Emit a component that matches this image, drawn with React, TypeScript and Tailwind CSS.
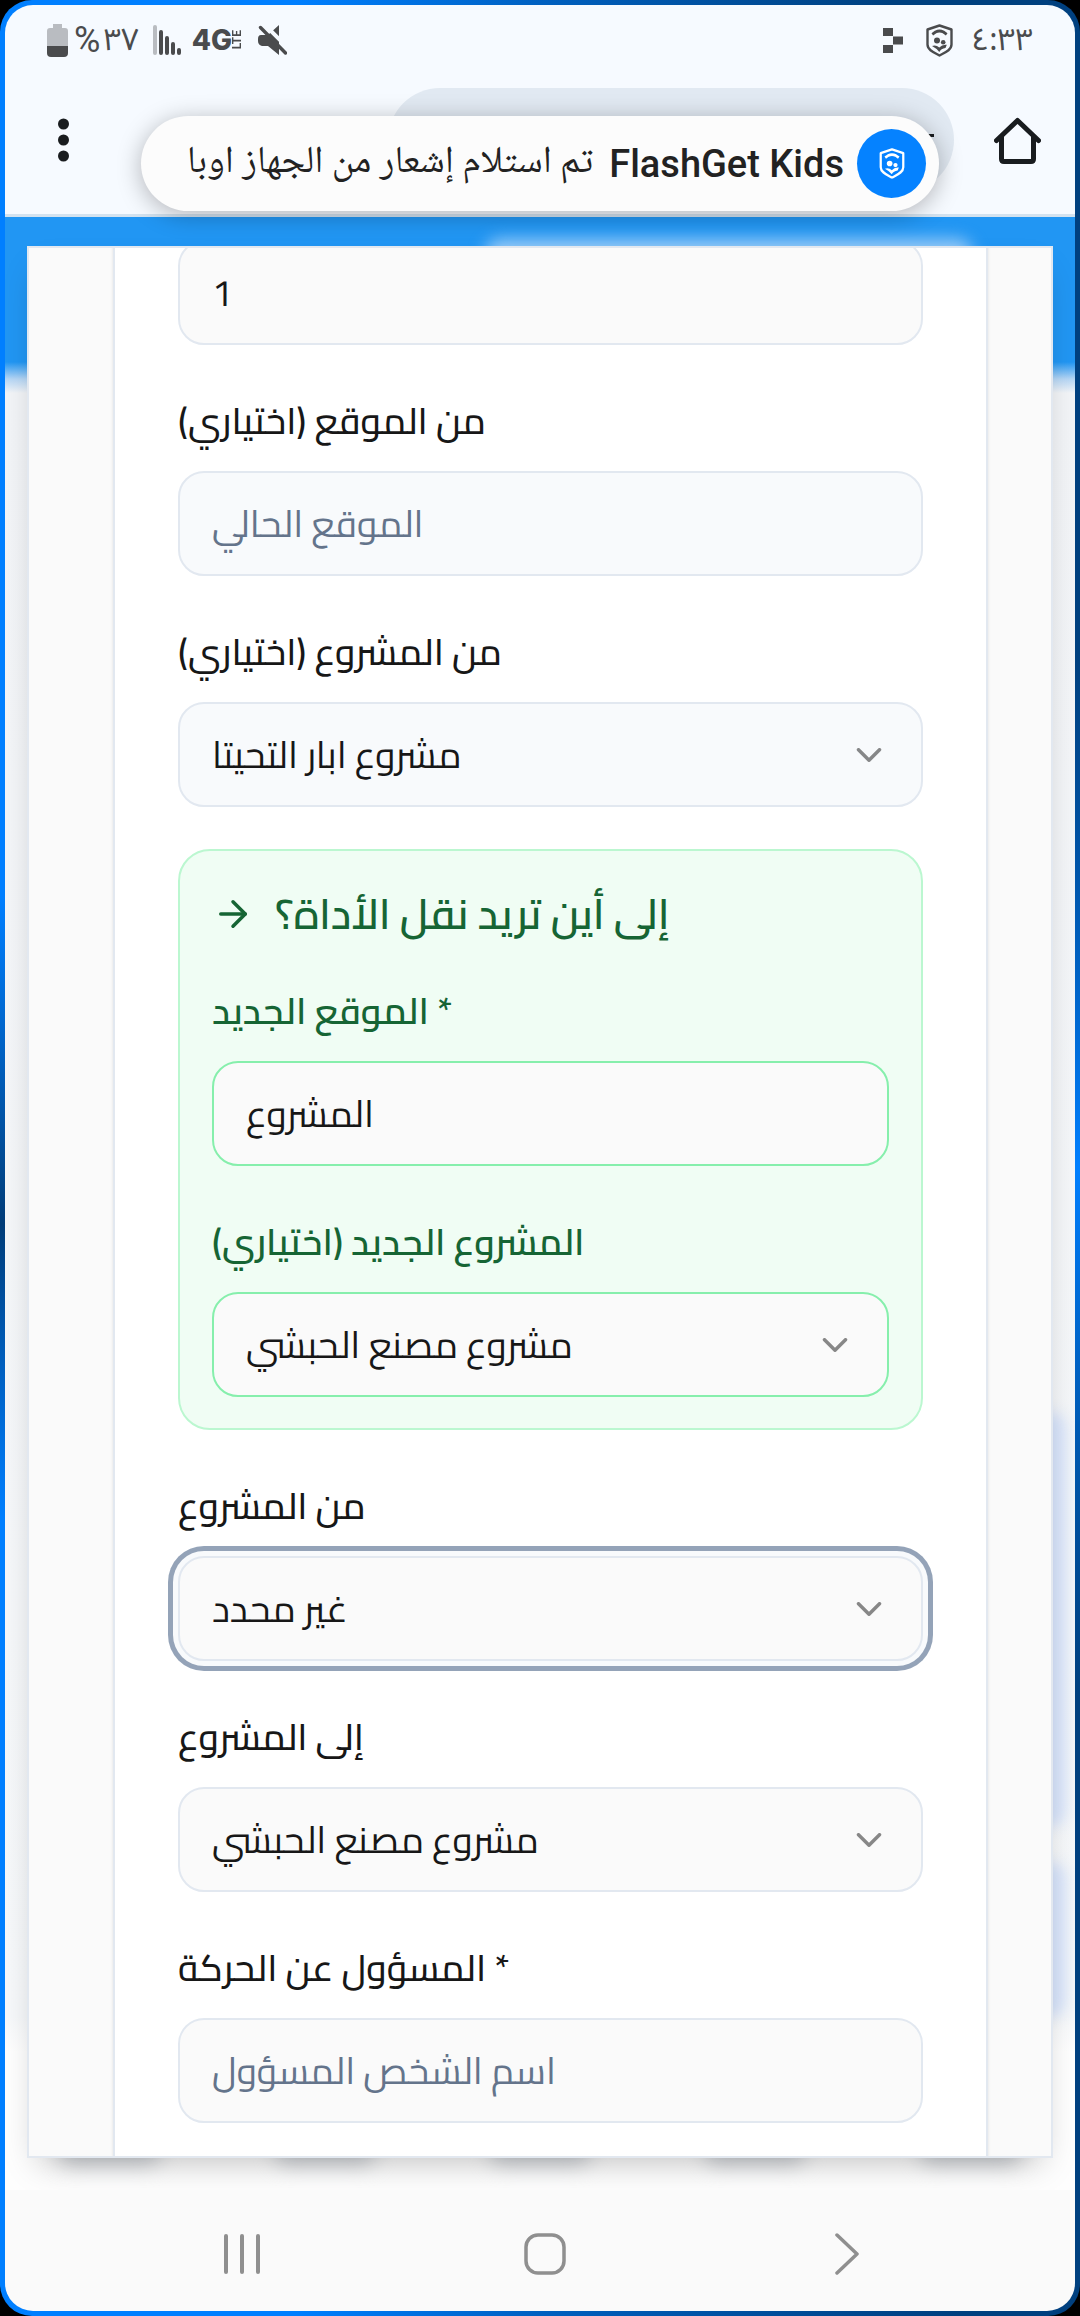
import { useState } from "react";
import type { ReactNode } from "react";
import { ArrowRight, ChevronDown } from "lucide-react";

type Tone = "plain" | "cool" | "green";

const controlTone: Record<Tone, string> = {
  plain: "border-[#e2e8f0] bg-[#fafafa]",
  cool: "border-[#e2e8f0] bg-[#f8fafc]",
  green: "border-[#86efac] bg-[#fafafa]",
};

const controlBase =
  "block h-[105px] w-full appearance-none rounded-[26px] border-2 px-[32px] text-left text-[37px] text-[#171717] outline-none placeholder:text-[#64748b] placeholder:opacity-100";

function Field({ id, label, tone, children }: { id: string; label: string; tone: Tone; children: ReactNode }) {
  return (
    <div className="flex flex-col gap-[17px]">
      <label
        htmlFor={id}
        className={
          tone === "green"
            ? "text-[37px] leading-[67px] font-semibold text-[#166534]"
            : "text-[37px] leading-[67px] font-medium text-[#171717]"
        }
      >
        {label}
      </label>
      {children}
    </div>
  );
}

function TextField(props: { id: string; label: string; tone?: Tone; value?: string; placeholder?: string }) {
  const tone = props.tone ?? "plain";
  const [value, setValue] = useState(props.value ?? "");
  return (
    <Field id={props.id} label={props.label} tone={tone}>
      <input
        id={props.id}
        type="text"
        value={value}
        placeholder={props.placeholder}
        onChange={(e) => setValue(e.target.value)}
        className={`${controlBase} ${controlTone[tone]}`}
      />
    </Field>
  );
}

function SelectField(props: { id: string; label: string; tone?: Tone; value: string; active?: boolean }) {
  const tone = props.tone ?? "plain";
  const ring = props.active ? "ring-[5px] ring-[#94a3b8] ring-offset-[5px] ring-offset-[#f8fafc]" : "";
  return (
    <Field id={props.id} label={props.label} tone={tone}>
      <div className="relative">
        <select id={props.id} defaultValue={props.value} className={`${controlBase} ${controlTone[tone]} ${ring}`}>
          <option>{props.value}</option>
        </select>
        <ChevronDown
          size={42}
          className="pointer-events-none absolute inset-y-0 right-[33px] my-auto text-[#171717] opacity-50"
        />
      </div>
    </Field>
  );
}

function Shield({ className }: { className: string }) {
  return (
    <svg viewBox="0 0 27 33" className={className} fill="none" stroke="currentColor">
      <path d="M13.5 1.5 25.5 5.5V20.5C25.5 26 19 28.5 13.5 31.5 8 28.5 1.5 26 1.5 20.5V5.5Z" strokeWidth="2.4" strokeLinejoin="round" />
      <path d="M6.3 10.3 9.5 8Q13.5 6 17.5 8L20.7 10.3" strokeWidth="2.8" />
      <circle cx="11" cy="16.5" r="3" fill="currentColor" stroke="none" />
      <circle cx="17.2" cy="18.2" r="2.3" fill="currentColor" stroke="none" />
      <path d="M6 22Q10 20.5 13.3 23.6 16 20.3 20.8 20.8L19.5 24Q15 24.5 13.3 28 11 24.6 6 22Z" fill="currentColor" stroke="none" />
    </svg>
  );
}

function StatusBar() {
  return (
    <div className="flex h-[70px] items-center justify-between pr-[42px] pl-[42px] text-[#4a4b4d]">
      <div className="flex items-center">
        <svg viewBox="0 0 21 33" className="h-[33px] w-[21px]">
          <path d="M6 0h9v4h3q3 0 3 3v15H0V7q0-3 3-3h3z" fill="#b9bcc1" />
          <path d="M0 22h21v7q0 4-4 4H4q-4 0-4-4z" fill="#4a4b4d" />
        </svg>
        <span dir="rtl" className="ml-[6px] flex items-center font-['Noto_Sans_Arabic','Roboto',sans-serif] text-[31px] leading-[40px]">
          <span>٣٧</span>
          <span className="mr-[3px] font-['Roboto',sans-serif] text-[36px]">%</span>
        </span>
        <svg viewBox="0 0 28 30" className="ml-[14px] h-[30px] w-[28px]" stroke="#4a4b4d" strokeWidth="4" strokeLinecap="round">
          <path d="M2 2v26" stroke="#b9bcc1" />
          <path d="M8 7v21M14 13v15M20 19v9M26 25v3" />
        </svg>
        <span className="ml-[11px] flex items-center">
          <span className="font-['Inter',sans-serif] text-[28px] leading-[30px] font-extrabold">4G</span>
          <span className="rotate-180 font-['Roboto',sans-serif] text-[12px] leading-[11px] font-semibold [writing-mode:vertical-rl]">
            LTE
          </span>
        </span>
        <svg viewBox="0 0 29 30" className="ml-[15px] h-[30px] w-[29px]">
          <path d="M3 10h7l11-10v30l-11-9H4q-4-1-4-5v-2q0-4 3-4z" fill="#4a4b4d" />
          <path d="M5-2 32 25" stroke="#f6faff" strokeWidth="4" />
          <path d="M2.5 2.5 27.5 28" stroke="#4a4b4d" strokeWidth="3.4" strokeLinecap="round" />
        </svg>
      </div>
      <div className="flex items-center">
        <svg viewBox="0 0 20 25" className="h-[25px] w-[20px]" fill="currentColor">
          <path d="M0 0h10v8H0zM10 8.500h10v8H10zM0 17h10v8H0z" />
        </svg>
        <Shield className="ml-[23px] h-[33px] w-[27px]" />
        <span className="ml-[18px] font-['Noto_Sans_Arabic','Roboto',sans-serif] text-[31px] leading-[40px]">٤:٣٣</span>
      </div>
    </div>
  );
}

function BrowserHeader() {
  return (
    <header className="relative border-b-[3px] border-[#d3e2ef] bg-[#f6faff]">
      <StatusBar />
      <div className="flex h-[139px] items-start pt-[13px] pr-[34px] pl-[53px] text-[#191c1f]">
        <button type="button" aria-label="القائمة" className="flex h-[104px] w-[11px] items-center">
          <svg viewBox="0 0 11 44" className="h-[44px] w-[11px]" fill="currentColor">
            <circle cx="5.500" cy="6" r="5.500" />
            <circle cx="5.500" cy="22" r="5.500" />
            <circle cx="5.500" cy="38" r="5.500" />
          </svg>
        </button>
        <div className="mr-[40px] ml-[319px] flex h-[104px] flex-1 justify-end rounded-full bg-[#e1e9f2] pt-[46px] pr-[20px]">
          <svg viewBox="0 0 20 14" className="h-[14px] w-[20px]" fill="none" stroke="currentColor" strokeWidth="3">
            <path d="M0 1.500H20M0 12H20" />
          </svg>
        </div>
        <button type="button" aria-label="الصفحة الرئيسية" className="flex h-[104px] items-center">
          <svg viewBox="0 0 47 47" className="h-[47px] w-[47px]" fill="none" stroke="currentColor" strokeWidth="5" strokeLinejoin="round" strokeLinecap="round">
            <path d="M2.500 23.500 23.500 3.500 44.500 23.500" />
            <path d="M7.500 20V42q0 2.500 2.500 2.500H37q2.500 0 2.500-2.500V20" />
          </svg>
        </button>
      </div>
      <div
        role="status"
        className="absolute inset-x-[136px] top-[111px] z-10 flex h-[95px] items-center justify-end overflow-hidden rounded-full bg-[#fcfcfc] pr-[13px] whitespace-nowrap text-[#222] shadow-[0_4px_24px_rgba(0,0,0,0.28)]"
      >
        <span dir="rtl" className="font-['Noto_Naskh_Arabic','Noto_Sans_Arabic',serif] text-[38px] leading-[60px]">
          تم استلام إشعار من الجهاز اوبا
        </span>
        <span className="ml-[16px] font-['Roboto',sans-serif] text-[38px] leading-[60px] font-medium">FlashGet Kids</span>
        <span className="ml-[13px] flex size-[69px] items-center justify-center rounded-full bg-[#0582ff] text-white">
          <Shield className="h-[31px] w-[26px]" />
        </span>
      </div>
    </header>
  );
}

function NavBar() {
  return (
    <nav className="flex h-[121px] items-center justify-between bg-[#fafafa] pt-[6px] pr-[207px] pl-[216px] text-[#8f8f8f]">
      <button type="button" aria-label="التطبيقات الأخيرة">
        <svg viewBox="0 0 42 42" className="size-[42px]" stroke="currentColor" strokeWidth="4" strokeLinecap="round">
          <path d="M5 3v36M21 3v36M37 3v36" />
        </svg>
      </button>
      <button type="button" aria-label="الشاشة الرئيسية">
        <svg viewBox="0 0 42 42" className="size-[42px]" fill="none" stroke="currentColor" strokeWidth="3.500">
          <rect x="2" y="2" width="38" height="38" rx="12" />
        </svg>
      </button>
      <button type="button" aria-label="رجوع">
        <svg viewBox="0 0 42 42" className="size-[42px]" fill="none" stroke="currentColor" strokeWidth="3.500" strokeLinecap="round" strokeLinejoin="round">
          <path d="M11 2 31 21 11 40" />
        </svg>
      </button>
    </nav>
  );
}

export default function App() {
  return (
    <div className="min-h-screen bg-black">
      <div className="flex min-h-screen flex-col rounded-[32px] bg-[conic-gradient(#0060c0_0deg,#00407f_17deg,#00407f_47deg,#007fff_91deg,#00407f_135deg,#00407f_160deg,#0060c0_180deg,#007fff_192deg,#007fff_236deg,#003c78_263deg,#007fff_296deg,#007fff_348deg,#0060c0_360deg)] p-[5px]">
        <div className="flex flex-1 flex-col overflow-hidden rounded-[28px] font-['Cairo','Noto_Sans_Arabic',sans-serif]">
          <BrowserHeader />

          <main className="relative flex-1 overflow-hidden bg-[linear-gradient(to_bottom,#2196f3_0px,#2196f3_145px,#b5d6f5_162px,#f2f4f7_176px,#f6f8fa_1800px,#fefefe_1835px)] px-[22px] pt-[29px] pb-[32px]">
            <div className="absolute top-[22px] right-[102px] left-[480px] h-[60px] rounded-2xl bg-[#9accf8] blur-[8px]" />
            <div className="absolute top-[1195px] right-[9px] h-[415px] w-[60px] rounded-2xl bg-[#d5e2fa] blur-[7px]" />
            <div className="absolute top-[1645px] right-[9px] h-[155px] w-[60px] rounded-2xl bg-[#d5e2fa] blur-[7px]" />
            <div className="absolute inset-x-[55px] bottom-[26px] flex h-[26px] justify-between">
              <span className="w-[100px] rounded-full bg-[#c8ccd1] blur-[10px]" />
              <span className="w-[100px] rounded-full bg-[#c8ccd1] blur-[10px]" />
              <span className="w-[100px] rounded-full bg-[#c8ccd1] blur-[10px]" />
              <span className="w-[100px] rounded-full bg-[#c8ccd1] blur-[10px]" />
              <span className="w-[100px] rounded-full bg-[#c8ccd1] blur-[10px]" />
            </div>

            <div
              role="dialog"
              aria-label="نقل الأداة"
              className="relative overflow-hidden border-2 border-[#e2e8f0] bg-[#fafafa] pr-[63px] pl-[84px] shadow-[0_16px_32px_-12px_rgba(0,0,0,0.25)]"
            >
              <form className="-mt-[8px] flex flex-col gap-[42px] border-x-2 border-[#e2e8f0] bg-white px-[63px] pb-[33px] shadow-sm">
                <input
                  type="text"
                  inputMode="numeric"
                  aria-label="الكمية"
                  defaultValue="1"
                  className={`${controlBase} ${controlTone.plain}`}
                />
                <TextField id="from-location" label="من الموقع (اختياري)" tone="cool" placeholder="الموقع الحالي" />
                <SelectField id="from-project-optional" label="من المشروع (اختياري)" tone="cool" value="مشروع ابار التحيتا" />

                <section className="flex flex-col gap-[32px] rounded-[32px] border-2 border-[#bbf7d0] bg-[#f0fdf4] px-[32px] py-[31px]">
                  <h3 className="flex items-center gap-[21px] text-[42px] leading-[63px] font-semibold text-[#166534]">
                    <ArrowRight size={42} />
                    إلى أين تريد نقل الأداة؟
                  </h3>
                  <div className="flex flex-col gap-[42px]">
                    <TextField id="new-location" label="الموقع الجديد *" tone="green" value="المشروع" />
                    <SelectField id="new-project" label="المشروع الجديد (اختياري)" tone="green" value="مشروع مصنع الحبشي" />
                  </div>
                </section>

                <SelectField id="from-project" label="من المشروع" value="غير محدد" active />
                <SelectField id="to-project" label="إلى المشروع" value="مشروع مصنع الحبشي" />
                <TextField id="responsible" label="المسؤول عن الحركة *" placeholder="اسم الشخص المسؤول" />
              </form>
            </div>
          </main>

          <NavBar />
        </div>
      </div>
    </div>
  );
}
